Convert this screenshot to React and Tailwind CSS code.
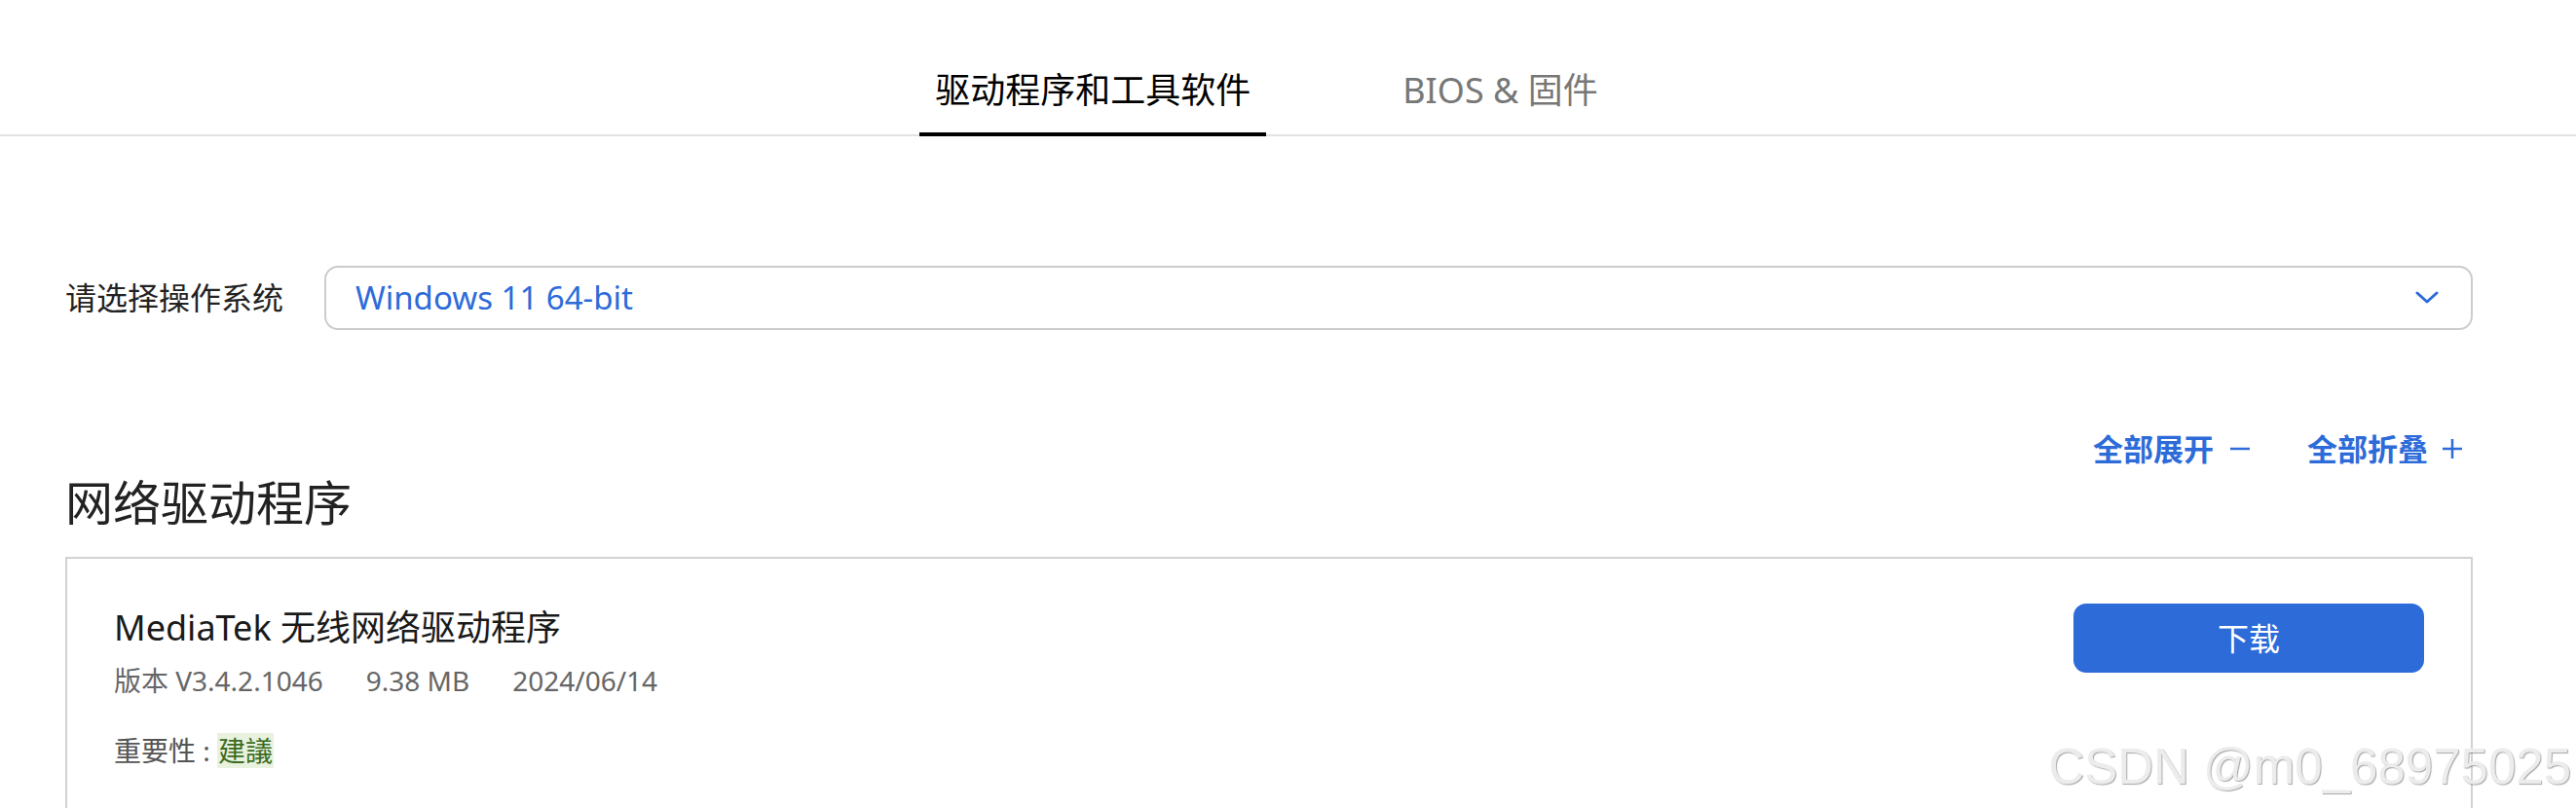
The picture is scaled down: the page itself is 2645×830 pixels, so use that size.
import React, { useState } from "react";

const TABS = ["驱动程序和工具软件", "BIOS & 固件"];

const Chevron = () => (
  <svg width="24" height="14" viewBox="0 0 24 14" fill="none">
    <polyline points="2,2 12,11 22,2" stroke="#2d6bd9" strokeWidth="3" strokeLinecap="round" strokeLinejoin="round" />
  </svg>
);

const Sign = ({ plus }) => (
  <svg width="22" height="22" viewBox="0 0 22 22" fill="none" stroke="#2d6bd9" strokeWidth="2.5">
    <line x1="1" y1="11" x2="21" y2="11" />
    {plus && <line x1="11" y1="1" x2="11" y2="21" />}
  </svg>
);

const App = () => {
  const [tab, setTab] = useState(0);

  return (
    <div className="relative min-h-[830px] bg-white text-[#1a1a1a] font-['Noto_Sans','Noto_Sans_CJK_SC',sans-serif] overflow-hidden">
      {/* Tabs */}
      <div className="flex h-[140px] items-end justify-center gap-[124px] border-b-2 border-[#e2e2e2] pr-[44px]">
        {TABS.map((t, i) => (
          <button
            key={t}
            onClick={() => setTab(i)}
            className={`-mb-[2px] px-4 pb-[19px] text-[36px] leading-[48px] border-b-4 ${
              tab === i ? "border-black text-black" : "border-transparent text-[#777]"
            }`}
          >
            {t}
          </button>
        ))}
      </div>

      <div className="pl-[67px] pr-[106px]">
        {/* OS select */}
        <div className="mt-[133px] flex items-center gap-[42px]">
          <span className="text-[32px] leading-[44px] text-[#222]">请选择操作系统</span>
          <div className="flex h-[66px] flex-1 items-center justify-between rounded-[14px] border-2 border-[#cccccc] pl-[30px] pr-[33px]">
            <span className="text-[33px] text-[#2d6bd9]">Windows 11 64-bit</span>
            <Chevron />
          </div>
        </div>

        {/* Expand / collapse */}
        <div className="mt-[102px] flex h-[40px] items-center justify-end pr-[10px] text-[31px] font-bold text-[#2d6bd9]">
          <span className="leading-[40px]">全部展开</span>
          <span className="ml-[16px] flex"><Sign /></span>
          <span className="ml-[58px] leading-[40px]">全部折叠</span>
          <span className="ml-[14px] flex"><Sign plus /></span>
        </div>

        <h2 className="mt-[4px] text-[49px] leading-[62px] text-[#222]">网络驱动程序</h2>

        {/* Driver card */}
        <div className="mt-[25px] flex items-start justify-between border-2 border-[#d2d2d2] px-[48px] pt-[48px] pb-[60px]">
          <div>
            <div className="text-[36px] leading-[46px] text-[#1a1a1a]">MediaTek 无线网络驱动程序</div>
            <div className="mt-[13px] flex gap-[44px] text-[28px] leading-[36px] text-[#666]">
              <span>版本 V3.4.2.1046</span>
              <span>9.38 MB</span>
              <span>2024/06/14</span>
            </div>
            <div className="mt-[36px] flex items-center text-[28px] leading-[36px] text-[#555]">
              <span>重要性 :&nbsp;</span>
              <span className="bg-[#e8f2df] px-[1px] text-[#3b6b1e]">建議</span>
            </div>
          </div>
          <button className="-mt-[2px] h-[71px] w-[360px] rounded-[13px] bg-[#2d6bd9] text-[32px] text-white">
            下载
          </button>
        </div>
      </div>

      {/* watermark */}
      <div className="pointer-events-none absolute right-[5px] top-[762px] font-['Liberation_Sans',sans-serif] text-[51px] leading-[51px] text-[#ececec] [text-shadow:1px_1px_1px_rgba(0,0,0,0.35)]">
        CSDN @m0_68975025
      </div>
    </div>
  );
};

export default App;
